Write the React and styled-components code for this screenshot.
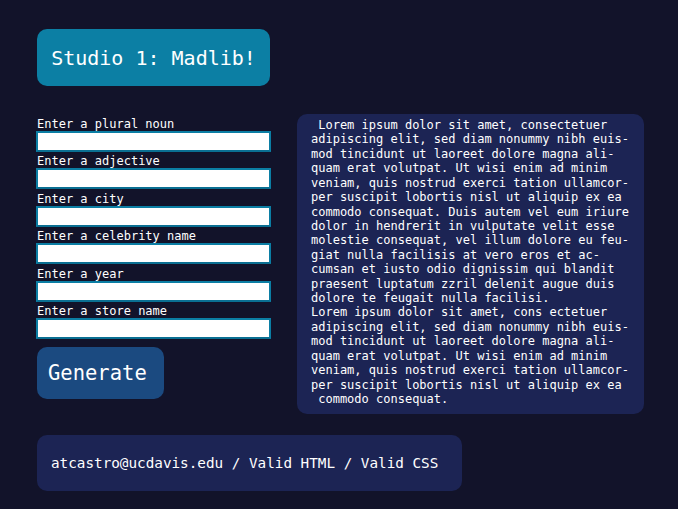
import React from 'react';
import styled, { createGlobalStyle } from 'styled-components';

const GlobalStyle = createGlobalStyle`
  body {
    margin: 0;
    background: #12132a;
    color: #ffffff;
    font-family: "DejaVu Sans Mono", "Liberation Mono", monospace;
  }
`;

const Page = styled.div`
  padding: 29px 0 0 37px;
  min-height: 509px;
  box-sizing: border-box;
`;

const Title = styled.h1`
  margin: 0;
  width: 233px;
  height: 57px;
  display: flex;
  align-items: center;
  justify-content: center;
  background: #0c7fa4;
  border-radius: 10px;
  font-size: 20px;
  font-weight: normal;
`;

const Main = styled.div`
  display: flex;
  align-items: flex-start;
  gap: 25px;
  margin-top: 29px;
`;

const Form = styled.form`
  width: 235px;
  display: flex;
  flex-direction: column;
`;

const Label = styled.label`
  display: block;
  font-size: 12px;
  line-height: 19px;
  height: 16px;
`;

const Input = styled.input`
  display: block;
  box-sizing: border-box;
  width: 235px;
  height: 21px;
  margin: 0 0 0.4px -1px;
  border: 2px solid #0b7ea4;
  border-bottom-color: #0a6f92;
  background: #ffffff;
`;

const Button = styled.button`
  margin-top: 8px;
  width: 127px;
  height: 52px;
  background: #1b4a80;
  border: none;
  border-radius: 10px;
  color: #ffffff;
  font-family: inherit;
  font-size: 20.5px;
  text-align: left;
  padding: 0 0 0 11px;
`;

const Story = styled.div`
  width: 347px;
  box-sizing: border-box;
  margin-top: -1px;
  padding: 4px 15px 8px 14px;
  background: #1c2454;
  border-radius: 10px;
  font-size: 12px;
  line-height: 14.42px;
`;

const Line = styled.div`
  white-space: pre;
`;

const Footer = styled.footer`
  margin-top: 21px;
  width: 425px;
  height: 56px;
  box-sizing: border-box;
  padding-left: 14px;
  display: flex;
  align-items: center;
  background: #1c2454;
  border-radius: 10px;
  font-size: 14.3px;
`;

const fields = [
  'Enter a plural noun',
  'Enter a adjective',
  'Enter a city',
  'Enter a celebrity name',
  'Enter a year',
  'Enter a store name',
];

const storyLines = [
  ' Lorem ipsum dolor sit amet, consectetuer',
  'adipiscing elit, sed diam nonummy nibh euis-',
  'mod tincidunt ut laoreet dolore magna ali-',
  'quam erat volutpat. Ut wisi enim ad minim',
  'veniam, quis nostrud exerci tation ullamcor-',
  'per suscipit lobortis nisl ut aliquip ex ea',
  'commodo consequat. Duis autem vel eum iriure',
  'dolor in hendrerit in vulputate velit esse',
  'molestie consequat, vel illum dolore eu feu-',
  'giat nulla facilisis at vero eros et ac-',
  'cumsan et iusto odio dignissim qui blandit',
  'praesent luptatum zzril delenit augue duis',
  'dolore te feugait nulla facilisi.',
  'Lorem ipsum dolor sit amet, cons ectetuer',
  'adipiscing elit, sed diam nonummy nibh euis-',
  'mod tincidunt ut laoreet dolore magna ali-',
  'quam erat volutpat. Ut wisi enim ad minim',
  'veniam, quis nostrud exerci tation ullamcor-',
  'per suscipit lobortis nisl ut aliquip ex ea',
  ' commodo consequat.',
];

function App() {
  return (
    <Page>
      <GlobalStyle />
      <Title>Studio 1: Madlib!</Title>
      <Main>
        <Form onSubmit={(e) => e.preventDefault()}>
          {fields.map((f, i) => (
            <React.Fragment key={f}>
              <Label htmlFor={'field' + i}>{f}</Label>
              <Input id={'field' + i} type="text" />
            </React.Fragment>
          ))}
          <Button type="submit">Generate</Button>
        </Form>
        <Story>
          {storyLines.map((l, i) => (
            <Line key={i}>{l}</Line>
          ))}
        </Story>
      </Main>
      <Footer>atcastro@ucdavis.edu / Valid HTML / Valid CSS</Footer>
    </Page>
  );
}

export default App;
